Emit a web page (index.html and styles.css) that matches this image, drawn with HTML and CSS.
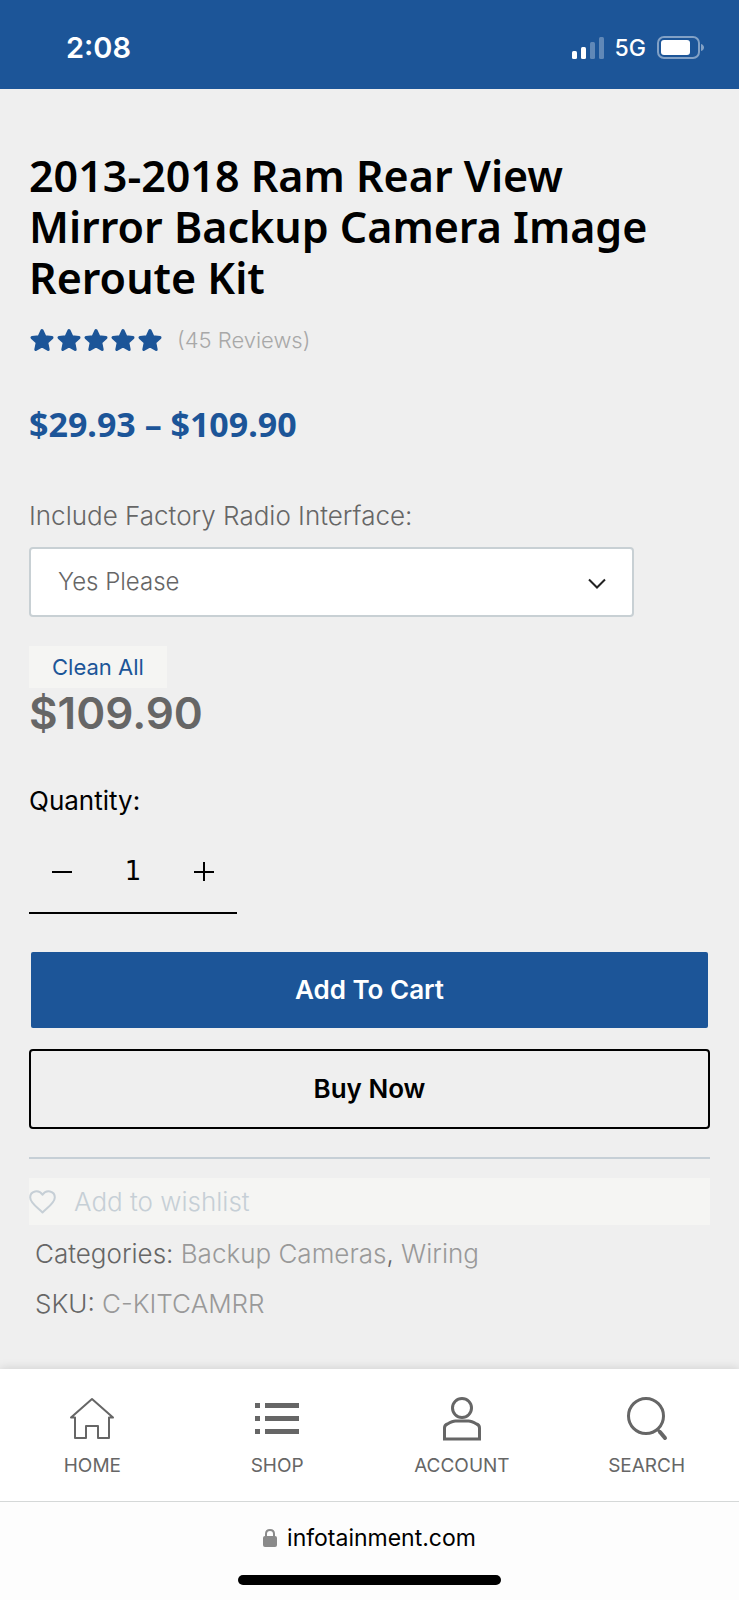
FILE: index.html
```html
<!DOCTYPE html>
<html lang="en">

<head>
    <meta charset="UTF-8">
    <meta name="viewport" content="width=device-width, initial-scale=1.0">
    <title>2013-2018 Ram Rear View Mirror Backup Camera Image Reroute Kit</title>
    <link rel="stylesheet" href="styles.css">
</head>

<body>

    <header class="status">
        <span class="time">2:08</span>
        <div class="signals">
            <svg width="32" height="22" viewBox="0 0 32 22" fill="#fff">
                <rect x="0" y="14" width="5" height="8" rx="1.5" />
                <rect x="9" y="10" width="5" height="12" rx="1.5" />
                <rect x="18" y="5" width="5" height="17" rx="1.5" opacity=".3" />
                <rect x="27" y="0" width="5" height="22" rx="1.5" opacity=".3" />
            </svg>
            <span class="network">5G</span>
            <svg width="48" height="24" viewBox="0 0 48 24">
                <rect x="1" y="1" width="41" height="21" rx="6" fill="none" stroke="#fff" stroke-width="2" opacity=".45" />
                <rect x="4" y="4" width="29" height="15" rx="3" fill="#fff" />
                <path d="M44 8c4 1 4 6 0 7z" fill="#fff" opacity=".45" />
            </svg>
        </div>
    </header>

    <main class="product">
        <h1>2013-2018 Ram Rear View Mirror Backup Camera Image Reroute Kit</h1>

        <div class="rating">
            <svg width="134" height="24" viewBox="0 0 134 24" fill="#1c5598" stroke="#1c5598" stroke-width="3" stroke-linejoin="round">
                <defs>
                    <path id="star" d="M13 2.500l3 6.300 7 .8-5.200 4.900 1.400 7-6.200-3.500-6.200 3.500 1.400-7L3 9.600l7-.8z" />
                </defs>
                <use href="#star" />
                <use href="#star" x="27" />
                <use href="#star" x="54" />
                <use href="#star" x="81" />
                <use href="#star" x="108" />
            </svg>
            <a href="#reviews">(45 Reviews)</a>
        </div>

        <p class="range">$29.93 – $109.90</p>

        <form class="options">
            <label class="option-label" for="radio">Include Factory Radio Interface:</label>
            <div class="select-box">
                <select id="radio">
                    <option>Yes Please</option>
                    <option>No Thanks</option>
                </select>
                <svg class="chevron" width="18" height="12" viewBox="0 0 18 12" fill="none" stroke="#222" stroke-width="2">
                    <path d="M1 1.500l8 8 8-8" />
                </svg>
            </div>

            <button type="reset" class="clean">Clean All</button>
            <p class="price">$109.90</p>

            <label class="qty-label" for="qty">Quantity:</label>
            <div class="qty">
                <button type="button" aria-label="Decrease">
                    <svg width="20" height="20" viewBox="0 0 20 20" stroke="#000" stroke-width="2">
                        <path d="M0 11h20" />
                    </svg>
                </button>
                <input type="text" id="qty" value="1">
                <button type="button" aria-label="Increase">
                    <svg width="20" height="20" viewBox="0 0 20 20" stroke="#000" stroke-width="2">
                        <path d="M0 11h20M10 1v19" />
                    </svg>
                </button>
            </div>

            <button type="button" class="add">Add To Cart</button>
            <button type="button" class="buy">Buy Now</button>
        </form>

        <div class="extras">
            <button type="button" class="wishlist">
                <svg width="27" height="24" viewBox="0 0 27 24" fill="none" stroke="#c6cfd6" stroke-width="2" stroke-linejoin="round">
                    <path d="M13.500 22.500C9 18 1.200 13 1.200 7.500c0-6.500 8.500-8.500 12.300-2.700C17.300-1 25.800 1 25.800 7.500c0 5.500-7.800 10.500-12.300 15z" />
                </svg>
                Add to wishlist
            </button>
            <p class="meta">Categories: <a href="#cameras">Backup Cameras</a>, <a href="#wiring">Wiring</a></p>
            <p class="meta">SKU: <span>C-KITCAMRR</span></p>
        </div>
    </main>

    <nav class="tabs">
        <a href="#home">
            <svg width="46" height="46" viewBox="0 0 46 46" fill="none" stroke="#666" stroke-width="2" stroke-linejoin="round">
                <path d="M6 21.500H2L23 3l21 18.500h-4V42H29V30H17v12H6z" />
            </svg>
            HOME
        </a>
        <a href="#shop">
            <svg width="46" height="46" viewBox="0 0 46 46" fill="#666">
                <path d="M1 7h5v5H1zM11 7h34v5H11zM1 20h5v5H1zM11 20h34v5H11zM1 33h5v5H1zM11 33h34v5H11z" />
            </svg>
            SHOP
        </a>
        <a href="#account">
            <svg width="46" height="46" viewBox="0 0 46 46" fill="none" stroke="#666" stroke-width="3">
                <circle cx="23" cy="12" r="9.500" />
                <path d="M5.500 43V32q0-3 3-4 5-3 8-3h13q3 0 8 3 3 1 3 4v11z" />
            </svg>
            ACCOUNT
        </a>
        <a href="#search">
            <svg width="46" height="46" viewBox="0 0 46 46" fill="none" stroke="#666">
                <circle cx="22" cy="20" r="17.500" stroke-width="3" />
                <path d="M33 33l3 3" stroke-width="3" />
                <path d="M36 36l5 6" stroke-width="4" stroke-linecap="round" />
            </svg>
            SEARCH
        </a>
    </nav>

    <footer class="browser">
        <div class="address">
            <svg width="14" height="18" viewBox="0 0 14 18">
                <path d="M3 9V5q0-4 4-4t4 4v4" fill="none" stroke="#8a8a8a" stroke-width="2" />
                <rect x="0" y="7" width="14" height="11" rx="2" fill="#8a8a8a" />
            </svg>
            <span>infotainment.com</span>
        </div>
        <div class="indicator"></div>
    </footer>

</body>

</html>
```
FILE: styles.css
```css
* {
    box-sizing: border-box;
}

body {
    margin: 0;
    min-height: 100vh;
    display: flex;
    flex-direction: column;
    background: #efefef;
    font-family: Inter, sans-serif;
    font-weight: 300;
    font-size: 26px;
    line-height: 32px;
    color: #666;
}

h1, p {
    margin: 0;
}

a {
    color: inherit;
    text-decoration: none;
}

button, input, select {
    font: inherit;
    color: inherit;
    border: none;
    background: none;
    padding: 0;
    margin: 0;
}

svg {
    display: block;
    flex: none;
}

.status {
    display: flex;
    justify-content: space-between;
    align-items: center;
    height: 89px;
    padding: 6px 34px 0 66px;
    background: #1c5598;
    color: #fff;
}

.time {
    font-size: 29px;
    font-weight: 600;
}

.signals {
    display: flex;
    align-items: center;
    gap: 11px;
}

.network {
    font-size: 23px;
    font-weight: 500;
}

.product {
    flex: 1;
    padding: 61px 29px 32px;
}

h1 {
    padding-right: 48px;
    font-family: "Noto Sans", sans-serif;
    font-size: 43px;
    font-weight: 600;
    line-height: 51px;
    color: #000;
}

.rating {
    display: flex;
    align-items: center;
    gap: 14px;
    margin-top: 21px;
    font-size: 22px;
    color: #a8a8a8;
}

.range {
    margin-top: 44px;
    font-family: "Noto Sans", sans-serif;
    font-size: 34px;
    font-weight: 700;
    line-height: 48px;
    color: #1c5598;
}

.options {
    display: flex;
    flex-direction: column;
    align-items: flex-start;
    margin-top: 52px;
}

.select-box {
    position: relative;
    width: 605px;
    max-width: 100%;
    margin-top: 15px;
}

.select-box select {
    appearance: none;
    width: 100%;
    height: 70px;
    padding: 0 27px;
    border: 2px solid #c8d0d4;
    border-radius: 4px;
    background: #fff;
    font-size: 24px;
}

.chevron {
    position: absolute;
    right: 28px;
    top: 31px;
}

.clean {
    margin-top: 29px;
    height: 42px;
    padding: 0 23px;
    background: #f5f5f3;
    font-size: 22px;
    font-weight: 400;
    color: #1c5598;
}

.price {
    font-size: 44px;
    font-weight: 600;
    line-height: 51px;
}

.qty-label {
    margin-top: 46px;
    font-weight: 400;
    color: #000;
}

.qty {
    display: flex;
    justify-content: space-between;
    align-items: center;
    width: 208px;
    height: 84px;
    margin-top: 13px;
    padding: 0 23px;
    border-bottom: 2px solid #000;
}

.qty input {
    width: 60px;
    text-align: center;
    font-family: "DejaVu Sans", sans-serif;
    font-weight: 400;
    color: #000;
}

.add, .buy {
    width: 100%;
    height: 80px;
    border-radius: 4px;
    font-weight: 600;
}

.add {
    margin-top: 36px;
    border: 2px solid transparent;
    background: #1c5598 padding-box;
    color: #fff;
}

.buy {
    margin-top: 19px;
    border: 2px solid #000;
    color: #000;
}

.extras {
    margin-top: 28px;
    padding-top: 19px;
    border-top: 2px solid #c6cfd6;
}

.wishlist {
    display: flex;
    align-items: center;
    gap: 18px;
    width: 100%;
    height: 47px;
    margin-bottom: 4px;
    background: #f5f5f3;
    color: #c6cfd6;
}

.meta {
    padding: 9px 6px;
}

.meta a, .meta span {
    color: #999;
}

.tabs {
    display: grid;
    grid-template-columns: repeat(4, 1fr);
    height: 132px;
    padding-top: 27px;
    background: #fff;
    box-shadow: 0 0 10px rgba(0, 0, 0, .15);
    font-size: 19px;
    font-weight: 400;
}

.tabs a {
    display: flex;
    flex-direction: column;
    align-items: center;
    gap: 8px;
}

.browser {
    display: flex;
    flex-direction: column;
    align-items: center;
    position: relative;
    height: 99px;
    padding: 20px 0 15px;
    justify-content: space-between;
    background: #fdfdfd;
    border-top: 1px solid #d5d8d8;
    color: #000;
}

.address {
    display: flex;
    align-items: center;
    gap: 10px;
    font-size: 23px;
    font-weight: 400;
}

.indicator {
    width: 263px;
    height: 10px;
    border-radius: 5px;
    background: #000;
}
```
